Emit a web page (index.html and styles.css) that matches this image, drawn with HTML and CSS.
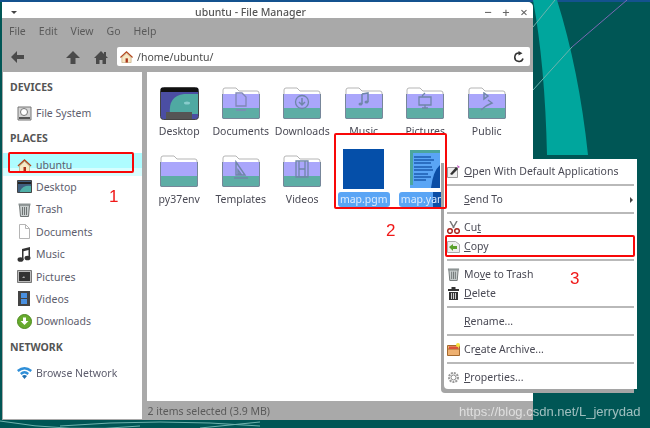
FILE: index.html
```html
<!DOCTYPE html>
<html lang="en">
<head>
  <meta charset="UTF-8">
  <title>ubuntu - File Manager</title>
  <link rel="stylesheet" href="styles.css">
</head>
<body>
  <!-- shared icons -->
  <svg class="defs" width="0" height="0">
    <symbol id="folder" viewBox="0 0 38 32">
      <path d="M1 8V3q0-2 2-2h11l3 3h18q2 0 2 2v2z" fill="#fff" stroke="#b5b5b5"/>
      <path d="M0 7h38v14H0z" fill="#aaa6fb"/>
      <path d="M0 21h38v9q0 2-2 2H2q-2 0-2-2z" fill="#5dada5"/>
      <path d="M.5 7v23q0 1.500 1.500 1.500h34q1.500 0 1.500-1.500V7" fill="none" stroke="#77869a"/>
    </symbol>
    <symbol id="house" viewBox="0 0 14 14">
      <path d="M7 1L0 7.500l1 1L7 3l6 5.500 1-1z" fill="#b4471c"/>
      <path d="M2 8l5-4.500L12 8v5.500H2z" fill="#f7e8c4" stroke="#a98a55" stroke-width=".5"/>
      <path d="M6 9h2.500v4.500H6z" fill="#a9331a"/>
    </symbol>
    <symbol id="trashcan" viewBox="0 0 14 15">
      <path d="M2 3h10l-1 11.500H3z" fill="#c9cfcf" stroke="#6d7373"/>
      <path d="M1 1.500h12v2H1z" fill="#8d9494"/>
      <path d="M5 5v8M7 5v8M9 5v8" stroke="#6d7373"/>
    </symbol>
  </svg>

  <svg class="wallpaper" width="650" height="428" viewBox="0 0 650 428">
    <path d="M0 0h650v2H0z" fill="#14528f"/>
    <path d="M530 0h27q22 70 31 155h-41q-2-90-14-155z" fill="#00a69d"/>
    <path d="M533 27L555 0M533 90l39-43" stroke="#6db3ae" fill="none"/>
    <path d="M572 47L627 0" stroke="#7a68b4" fill="none"/>
    <path d="M0 421q70 12 140 5M60 426q100-8 200 0M200 428l60-6" stroke="#6db3ae" fill="none"/>
  </svg>

  <div class="window">
    <header class="titlebar">
      <span class="title-arrow"></span>
      <span class="title-text">ubuntu - File Manager</span>
      <span class="title-buttons"><span>&minus;</span><span>+</span><span>&times;</span></span>
    </header>

    <nav class="menubar">
      <span>File</span><span>Edit</span><span>View</span><span>Go</span><span>Help</span>
    </nav>

    <div class="toolbar">
      <svg class="tool tool-back" width="13" height="12" viewBox="0 0 13 12"><path d="M6 0L0 6l6 6V8h7V4H6z" fill="#4a4a4a"/></svg>
      <svg class="tool tool-up" width="14" height="13" viewBox="0 0 14 13"><path d="M7 0L0 7h4.500v6h5V7H14z" fill="#4a4a4a"/></svg>
      <svg class="tool tool-home" width="14" height="13" viewBox="0 0 14 13"><path d="M7 0L0 7h2v6h3.500V9h3v4H12V7h2l-2-2V1h-2v2z" fill="#4a4a4a"/></svg>
      <div class="address">
        <svg width="13" height="13"><use href="#house"/></svg>
        <span class="address-path">/home/ubuntu/</span>
        <svg class="reload" width="12" height="12" viewBox="0 0 12 12"><path d="M10 7.500A4.200 4.200 0 1 1 6 2" fill="none" stroke="#333" stroke-width="1.600"/><path d="M5.500 0l4 2.200-4 2.200z" fill="#333"/></svg>
      </div>
    </div>

    <div class="panes">
      <aside class="sidebar">
        <h3 class="side-head">DEVICES</h3>
        <div class="side-row side-first">
          <svg width="15" height="15" viewBox="0 0 15 15"><path d="M1 1h13v13H1z" fill="#d5d5d5" stroke="#777"/><circle cx="7" cy="6" r="3.500" fill="#fff" stroke="#777"/><path d="M2 11h11v2H2z" fill="#555"/></svg>
          <span>File System</span>
        </div>
        <h3 class="side-head">PLACES</h3>
        <div class="side-row side-first side-active">
          <svg width="14" height="14"><use href="#house"/></svg>
          <span>ubuntu</span>
        </div>
        <div class="side-row">
          <svg width="15" height="13" viewBox="0 0 15 13"><path d="M.5.500h14v12H.500z" fill="#3f5f7f" stroke="#444"/><path d="M1 2h13v2H1z" fill="#222"/><path d="M3 11q3-6 11-5v6H3z" fill="#4fb0a8"/></svg>
          <span>Desktop</span>
        </div>
        <div class="side-row">
          <svg width="14" height="15"><use href="#trashcan"/></svg>
          <span>Trash</span>
        </div>
        <div class="side-row">
          <svg width="15" height="15" viewBox="0 0 15 15"><path d="M2.500.500h6l4 4v10h-10z" fill="#fff" stroke="#b5b5b5"/><path d="M8.500.500v4h4" fill="none" stroke="#b5b5b5"/></svg>
          <span>Documents</span>
        </div>
        <div class="side-row">
          <svg width="15" height="15" viewBox="0 0 15 15"><path d="M5 2l8-2v11h-1.500V3L6.500 4.300V13H5z" fill="#333"/><ellipse cx="3.500" cy="12.500" rx="3" ry="2.300" fill="#333"/><ellipse cx="10.500" cy="11" rx="3" ry="2.300" fill="#333"/></svg>
          <span>Music</span>
        </div>
        <div class="side-row">
          <svg width="15" height="13" viewBox="0 0 15 13"><path d="M.5.500h14v12H.500z" fill="#bbb" stroke="#777"/><path d="M2 2h11v9H2z" fill="#333"/><path d="M5 8l2-2 1 2z" fill="#aaa"/></svg>
          <span>Pictures</span>
        </div>
        <div class="side-row">
          <svg width="15" height="15" viewBox="0 0 15 15"><path d="M1 0h12v15H1z" fill="#444"/><path d="M4 2h6v5H4z" fill="#4a90e0"/><path d="M4 8h6v5H4z" fill="#4a90e0"/></svg>
          <span>Videos</span>
        </div>
        <div class="side-row">
          <svg width="15" height="15" viewBox="0 0 15 15"><circle cx="7.500" cy="7.500" r="7" fill="#67ab2d" stroke="#4d8a1e"/><path d="M6 3.500h3V7h2.500l-4 4-4-4H6z" fill="#fff"/></svg>
          <span>Downloads</span>
        </div>
        <h3 class="side-head">NETWORK</h3>
        <div class="side-row side-first">
          <svg width="15" height="12" viewBox="0 0 15 12"><path d="M0 3q7.500-6 15 0l-1.500 2q-6-5-12 0z" fill="#2f8fd8"/><path d="M3 6q4.500-4 9 0l-1.500 2q-3-3-6 0z" fill="#2f8fd8"/><path d="M7.500 12L5 9q2.500-2 5 0z" fill="#1f6fb0"/></svg>
          <span>Browse Network</span>
        </div>
      </aside>

      <div class="splitter"></div>

      <div class="right-pane">
        <main class="files">
          <div class="file">
            <div class="file-icon">
              <svg width="39" height="33" viewBox="0 0 39 33"><rect x=".5" y=".5" width="38" height="32" rx="3" fill="#4b4ea3" stroke="#444"/><path d="M1 1h37v4H1z" fill="#111"/><path d="M10 27q-2-18 14-20h14v20z" fill="#4fa9a2"/><ellipse cx="27" cy="16" rx="3" ry="1.500" fill="#8cc"/><path d="M6 25h26v7H6z" fill="#555"/></svg>
            </div>
            <div class="file-name">Desktop</div>
          </div>
          <div class="file">
            <div class="file-icon">
              <svg width="38" height="32"><use href="#folder"/></svg>
              <svg class="glyph" width="16" height="20" viewBox="0 0 16 20"><path d="M3 1h6l4 4v9H3zM3 18h10" fill="none" stroke="#7f87b5" stroke-width="1.300"/></svg>
            </div>
            <div class="file-name">Documents</div>
          </div>
          <div class="file">
            <div class="file-icon">
              <svg width="38" height="32"><use href="#folder"/></svg>
              <svg class="glyph" width="16" height="20" viewBox="0 0 16 20"><circle cx="8" cy="10" r="6.500" fill="none" stroke="#6f86a8" stroke-width="1.300"/><path d="M8 6v6M5 10l3 3 3-3" fill="none" stroke="#6f86a8" stroke-width="1.500"/></svg>
            </div>
            <div class="file-name">Downloads</div>
          </div>
          <div class="file">
            <div class="file-icon">
              <svg width="38" height="32"><use href="#folder"/></svg>
              <svg class="glyph" width="16" height="20" viewBox="0 0 16 20"><path d="M6 2l6-1v9M6 2v10" fill="none" stroke="#6f86a8" stroke-width="1.500"/><ellipse cx="4.500" cy="12" rx="2" ry="1.500" fill="#6f86a8"/><ellipse cx="10.500" cy="10" rx="2" ry="1.500" fill="#6f86a8"/></svg>
            </div>
            <div class="file-name">Music</div>
          </div>
          <div class="file">
            <div class="file-icon">
              <svg width="38" height="32"><use href="#folder"/></svg>
              <svg class="glyph" width="18" height="20" viewBox="0 0 18 20"><path d="M3 5h12v8H3zM6 16h6M9 13v3M6 4l3-3" fill="none" stroke="#6f86a8" stroke-width="1.300"/></svg>
            </div>
            <div class="file-name">Pictures</div>
          </div>
          <div class="file">
            <div class="file-icon">
              <svg width="38" height="32"><use href="#folder"/></svg>
              <svg class="glyph" width="18" height="20" viewBox="0 0 18 20"><path d="M6 1l4 3-4 3zM10 8l4 3-6 3M3 18l5-4" fill="none" stroke="#6f86a8" stroke-width="1.500"/></svg>
            </div>
            <div class="file-name">Public</div>
          </div>
          <div class="file">
            <div class="file-icon">
              <svg width="38" height="32"><use href="#folder"/></svg>
            </div>
            <div class="file-name">py37env</div>
          </div>
          <div class="file">
            <div class="file-icon">
              <svg width="38" height="32"><use href="#folder"/></svg>
              <svg class="glyph" width="18" height="20" viewBox="0 0 18 20"><path d="M4 2l9 13H4zM6 10l3 4H6zM2 18h14" fill="none" stroke="#6f86a8" stroke-width="1.400"/></svg>
            </div>
            <div class="file-name">Templates</div>
          </div>
          <div class="file">
            <div class="file-icon">
              <svg width="38" height="32"><use href="#folder"/></svg>
              <svg class="glyph" width="16" height="20" viewBox="0 0 16 20"><path d="M2 1h12v16H2zM5 1v16M11 1v16M5 9h6" fill="none" stroke="#6f86a8" stroke-width="1.300"/></svg>
            </div>
            <div class="file-name">Videos</div>
          </div>
          <div class="file file-selected">
            <div class="file-icon">
              <div class="thumb-pgm"></div>
            </div>
            <div class="file-name">map.pgm</div>
          </div>
          <div class="file file-selected">
            <div class="file-icon">
              <svg class="thumb-doc" width="30" height="38" viewBox="0 0 30 38"><path d="M0 0h30v38H0z" fill="#5aa5f5"/><path d="M0 0h30v3H3v32H0z" fill="#4ba59d"/><path d="M4 7h17M4 10h20M4 13h17M4 17h18M4 20h19M4 24h14M4 27h17M4 30h12" stroke="#1c5cb0" stroke-width="1.500"/><path d="M30 15v23H21q2-17 9-23z" fill="#0b4ea6"/></svg>
            </div>
            <div class="file-name file-name-cut">map.yaml</div>
          </div>
        </main>
        <footer class="statusbar">2 items selected (3.9 MB)</footer>
      </div>
    </div>
  </div>

  <div class="context-menu">
    <div class="menu-item">
      <svg width="13" height="13" viewBox="0 0 13 13"><path d="M.5 2.500h10v10H.500z" fill="#eee" stroke="#999"/><path d="M3 9l6-7 2 2-6 6z" fill="#333"/><path d="M10 0l3 2-2 1z" fill="#c050c0"/></svg>
      <span><u>O</u>pen With Default Applications</span>
    </div>
    <div class="menu-sep"></div>
    <div class="menu-item menu-arrow"><span><u>S</u>end To</span></div>
    <div class="menu-sep"></div>
    <div class="menu-item">
      <svg width="13" height="13" viewBox="0 0 13 13"><path d="M3 0l4 7M10 0L6 7" stroke="#777" stroke-width="1.500"/><circle cx="3" cy="10" r="2.300" fill="none" stroke="#a8241c" stroke-width="1.500"/><circle cx="10" cy="10" r="2.300" fill="none" stroke="#a8241c" stroke-width="1.500"/></svg>
      <span>Cu<u>t</u></span>
    </div>
    <div class="menu-item">
      <svg width="13" height="13" viewBox="0 0 13 13"><path d="M.5 1.500h8l4 3v8H.500z" fill="#eee" stroke="#aaa"/><path d="M2 7l4-3v2h4v3H6v2z" fill="#5aa02c"/></svg>
      <span><u>C</u>opy</span>
    </div>
    <div class="menu-sep"></div>
    <div class="menu-item">
      <svg width="13" height="14"><use href="#trashcan"/></svg>
      <span>Mo<u>v</u>e to Trash</span>
    </div>
    <div class="menu-item">
      <svg width="13" height="13" viewBox="0 0 13 13"><path d="M1 2h11v2H1zM4.500 0h4v2h-4z" fill="#333"/><path d="M2 5h9v8H2z" fill="#333"/><path d="M4.500 6v6M6.500 6v6M8.500 6v6" stroke="#ccc"/></svg>
      <span><u>D</u>elete</span>
    </div>
    <div class="menu-sep"></div>
    <div class="menu-item menu-noicon"><span><u>R</u>ename...</span></div>
    <div class="menu-sep"></div>
    <div class="menu-item">
      <svg width="13" height="13" viewBox="0 0 13 13"><path d="M.5 2.500h12v10H.500z" fill="#eeb070" stroke="#a5692d"/><path d="M.5 6h12" stroke="#a5692d"/><path d="M2 3.500h9V6H2z" fill="#d9513a"/><circle cx="11" cy="2" r="2" fill="#f5e33c"/></svg>
      <span>Cr<u>e</u>ate Archive...</span>
    </div>
    <div class="menu-sep"></div>
    <div class="menu-item">
      <svg width="13" height="13" viewBox="0 0 13 13"><circle cx="6.500" cy="6.500" r="4.500" fill="none" stroke="#999" stroke-width="2" stroke-dasharray="2 1"/><circle cx="6.500" cy="6.500" r="2.500" fill="none" stroke="#888"/></svg>
      <span><u>P</u>roperties...</span>
    </div>
  </div>

  <div class="mark mark-place"></div>
  <div class="mark mark-files"></div>
  <div class="mark mark-copy"></div>
  <span class="step step-1">1</span>
  <span class="step step-2">2</span>
  <span class="step step-3">3</span>
  <span class="watermark">https://blog.csdn.net/L_jerrydad</span>
</body>
</html>
```

FILE: styles.css
```css
body {
  margin: 0;
  width: 650px;
  height: 428px;
  position: relative;
  overflow: hidden;
  background-color: #005655;
  font-family: "Noto Sans", sans-serif;
  font-size: 10.5px;
  color: #4a4a4a;
}
.defs {
  position: absolute;
}
.wallpaper {
  position: absolute;
  left: 0;
  top: 0;
}

/* window */
.window {
  position: absolute;
  left: 2px;
  top: 2px;
  width: 531px;
  height: 418px;
  display: flex;
  flex-direction: column;
  background: #a9a9a9;
  border-top-right-radius: 5px;
  overflow: hidden;
  filter: blur(0.3px);
}
.titlebar {
  height: 13px;
  flex: none;
  display: flex;
  align-items: center;
  justify-content: center;
  position: relative;
  background: #fff;
  padding-top: 3px;
  margin-bottom: -3px;
  font-weight: 500;
  color: #555;
}
.title-arrow {
  position: absolute;
  left: 9px;
  top: 9px;
  border-left: 3px solid transparent;
  border-right: 3px solid transparent;
  border-top: 3px solid #444;
}
.title-text {
  margin-right: 34px;
}
.title-buttons {
  position: absolute;
  right: 4px;
  top: 2px;
  display: flex;
  gap: 8px;
  font-size: 13px;
  line-height: 16px;
  color: #666;
}
.title-buttons span {
  width: 10px;
  text-align: center;
}
.menubar {
  flex: none;
  height: 26px;
  margin-top: 3px;
  display: flex;
  align-items: center;
  gap: 13px;
  padding: 0 7px;
  color: #5a5a5a;
}
.toolbar {
  flex: none;
  height: 28px;
  box-sizing: border-box;
  display: flex;
  align-items: flex-start;
  padding: 3px 3px 0 9px;
}
.tool {
  margin-top: 4px;
}
.tool-up {
  margin-left: 42px;
}
.tool-home {
  margin-left: 14px;
}
.address {
  margin-left: 9px;
  flex: 1;
  height: 19px;
  display: flex;
  align-items: center;
  gap: 4px;
  padding: 0 5px 0 3px;
  background: #fff;
  border-radius: 2px;
}
.reload {
  margin-left: auto;
}

/* panes */
.panes {
  flex: 1;
  min-height: 0;
  display: flex;
}
.sidebar {
  width: 139px;
  margin-left: 1px;
  margin-bottom: 1px;
  padding-top: 6px;
  box-sizing: border-box;
  background: #fff;
}
.side-head {
  margin: 5px 0 0;
  padding-left: 7px;
  height: 18px;
  line-height: 18px;
  font-size: 10.5px;
  font-weight: 700;
  color: #555;
}
.side-head:first-child {
  margin-top: 0;
}
.side-row {
  height: 22.4px;
  display: flex;
  align-items: center;
  padding-left: 14px;
  color: #5d5d6d;
}
.side-row svg {
  width: 15px;
  margin-right: 4px;
  flex: none;
}
.side-first {
  margin-top: 6px;
}
.side-active {
  background: linear-gradient(#aefcff 66%, #d6feff 66%);
}
.splitter {
  width: 4.5px;
  flex: none;
}
.right-pane {
  flex: 1;
  min-width: 0;
  display: flex;
  flex-direction: column;
}
.files {
  flex: 1;
  background: #fff;
  padding: 10px 0 0 2px;
  display: grid;
  grid-template-columns: repeat(6, 61.5px);
  grid-auto-rows: 67.5px;
}
.file {
  display: flex;
  flex-direction: column;
  align-items: center;
}
.file-icon {
  height: 42px;
  width: 100%;
  display: flex;
  align-items: center;
  justify-content: center;
  position: relative;
}
.glyph {
  position: absolute;
  left: 50%;
  top: 10px;
  transform: translateX(-50%);
}
.file-name {
  height: 15px;
  line-height: 15px;
  white-space: nowrap;
  color: #4a4a55;
}
.file-selected .file-name {
  padding: 0 2px;
  border-radius: 3px;
  background: #5aa5f5;
  color: #dcecff;
}
.file-name-cut {
  background: linear-gradient(90deg, #5aa5f5 65%, #0b4ea6 65%) !important;
}
.thumb-pgm {
  width: 41px;
  height: 40px;
  margin-top: -4px;
  background: #054fa9;
}
.thumb-doc {
  margin-top: -4px;
}
.statusbar {
  flex: none;
  height: 19px;
  line-height: 20px;
  padding-left: 1px;
  color: #5a5a5a;
}

/* context menu */
.context-menu {
  position: absolute;
  left: 444px;
  top: 159px;
  width: 193px;
  box-sizing: border-box;
  padding: 2.5px 2px;
  background: #fff;
  box-shadow: -3px 4px 0 #a5a5a5;
  border-bottom-left-radius: 4px;
  filter: blur(0.3px);
}
.menu-item {
  height: 19px;
  display: flex;
  align-items: center;
  padding-left: 1px;
  color: #4a4a55;
}
.menu-item svg {
  width: 13px;
  margin-right: 4px;
  flex: none;
}
.menu-arrow span,
.menu-noicon span {
  margin-left: 17px;
}
.menu-arrow {
  position: relative;
}
.menu-arrow::after {
  content: "";
  position: absolute;
  right: 2px;
  top: 7px;
  border-top: 3px solid transparent;
  border-bottom: 3px solid transparent;
  border-left: 3px solid #444;
}
.menu-sep {
  height: 9px;
  margin: 0 1px;
  background: linear-gradient(#b9b9b9, #b9b9b9) center / 100% 2px no-repeat;
}

/* annotations */
.mark {
  position: absolute;
  box-sizing: border-box;
  border: 2px solid #f80808;
  border-radius: 2px;
}
.mark-place {
  left: 8px;
  top: 152px;
  width: 126px;
  height: 21px;
}
.mark-files {
  left: 334px;
  top: 133px;
  width: 113px;
  height: 76px;
}
.mark-copy {
  left: 445px;
  top: 235px;
  width: 190px;
  height: 22px;
}
.step {
  position: absolute;
  font-family: "Liberation Sans", sans-serif;
  font-size: 17px;
  line-height: 20px;
  color: #f01818;
}
.step-1 {
  left: 109px;
  top: 187px;
}
.step-2 {
  left: 386px;
  top: 221px;
}
.step-3 {
  left: 570px;
  top: 269px;
}
.watermark {
  position: absolute;
  left: 459px;
  top: 404px;
  font-family: "Liberation Sans", sans-serif;
  font-size: 13px;
  line-height: 16px;
  color: rgba(255, 255, 255, 0.62);
  white-space: nowrap;
}
```
